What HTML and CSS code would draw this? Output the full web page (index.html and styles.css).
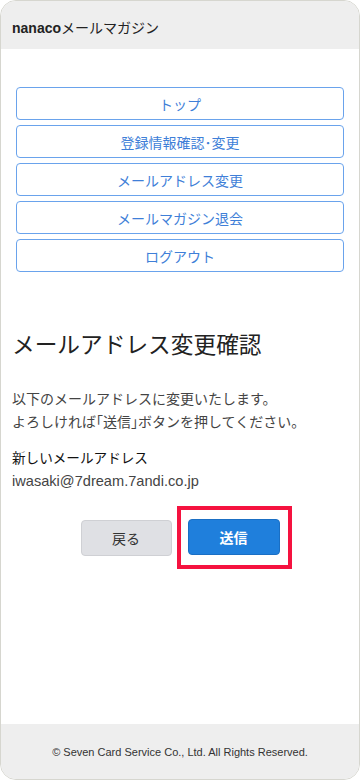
FILE: index.html
```html
<!DOCTYPE html>
<html lang="ja">
<head>
<meta charset="utf-8">
<title>nanacoメールマガジン</title>
<link rel="stylesheet" href="styles.css">
</head>
<body>
<div class="frame">
  <header class="header">
    <h1 class="site-title"><span class="brand">nanaco</span>メールマガジン</h1>
  </header>
  <main class="main">
    <nav class="nav">
      <a class="nav-btn" href="#">トップ</a>
      <a class="nav-btn" href="#">登録情報確認･変更</a>
      <a class="nav-btn" href="#">メールアドレス変更</a>
      <a class="nav-btn" href="#">メールマガジン退会</a>
      <a class="nav-btn" href="#">ログアウト</a>
    </nav>
    <h2 class="page-title">メールアドレス変更確認</h2>
    <p class="lead">以下のメールアドレスに変更いたします。<br>よろしければ<span class="half">「</span>送信<span class="half">」</span>ボタンを押してください。</p>
    <div class="field">
      <div class="field-label">新しいメールアドレス</div>
      <div class="field-value">iwasaki@7dream.7andi.co.jp</div>
    </div>
    <div class="actions">
      <button class="btn btn-back" type="button">戻る</button>
      <div class="highlight">
        <button class="btn btn-submit" type="button">送信</button>
      </div>
    </div>
  </main>
  <footer class="footer">© Seven Card Service Co., Ltd. All Rights Reserved.</footer>
</div>
</body>
</html>
```

FILE: styles.css
```css
* { box-sizing: border-box; }
html, body { margin: 0; padding: 0; background: #fff; }
body {
  font-family: "Liberation Sans", "Noto Sans CJK JP", sans-serif;
  color: #333;
  width: 360px;
  height: 780px;
}
.frame {
  width: 360px;
  height: 780px;
  border: 1px solid #d6d6cf;
  border-radius: 16px;
  overflow: hidden;
  display: flex;
  flex-direction: column;
  background: #fff;
}
.header {
  background: #eeeeee;
  height: 48px;
  padding: 0 11px;
  display: flex;
  align-items: center;
}
.site-title {
  margin: 0;
  font-size: 14px;
  font-weight: normal;
  color: #222;
  padding-top: 3px;
}
.brand { font-weight: bold; }
.main {
  flex: 1;
  padding: 38px 15px 0 11px;
}
.nav {
  display: flex;
  flex-direction: column;
  gap: 5px;
  padding-left: 4px;
}
.nav-btn {
  display: flex;
  align-items: center;
  justify-content: center;
  height: 33px;
  border: 1px solid #6aa3ec;
  border-radius: 4px;
  color: #3f7fd8;
  font-size: 14px;
  text-decoration: none;
}
.page-title {
  margin: 58px 0 0;
  font-size: 22.7px;
  font-weight: normal;
  color: #222;
  line-height: 30px;
}
.lead {
  margin: 28px 0 0;
  font-size: 14px;
  line-height: 23px;
  color: #444;
}
.half {
  font-feature-settings: "halt";
}
.field { margin-top: 13px; }
.field-label {
  font-size: 13.6px;
  line-height: 23px;
  color: #111;
  font-weight: normal;
}
.field-value {
  font-size: 14.6px;
  line-height: 23px;
  color: #444;
}
.actions {
  display: flex;
  justify-content: center;
  align-items: center;
  gap: 5px;
  margin-top: 13px;
  padding-left: 16px;
}
.btn {
  width: 92px;
  height: 36px;
  border-radius: 4px;
  font-family: "Liberation Sans", "Noto Sans CJK JP", sans-serif;
  font-size: 14px;
  cursor: pointer;
}
.btn-back {
  width: 91px;
  background: #dfe0e4;
  border: 1px solid #cfd0d4;
  color: #333;
}
.highlight {
  border: 4px solid #f5123f;
  padding: 9px 8px 10px 7px;
}
.btn-submit {
  background: #1f7fdc;
  border: 1px solid #1a6fc4;
  color: #fff;
  font-weight: bold;
}
.footer {
  background: #eeeeee;
  height: 55px;
  display: flex;
  align-items: center;
  justify-content: center;
  font-size: 11px;
  color: #333;
}
```
